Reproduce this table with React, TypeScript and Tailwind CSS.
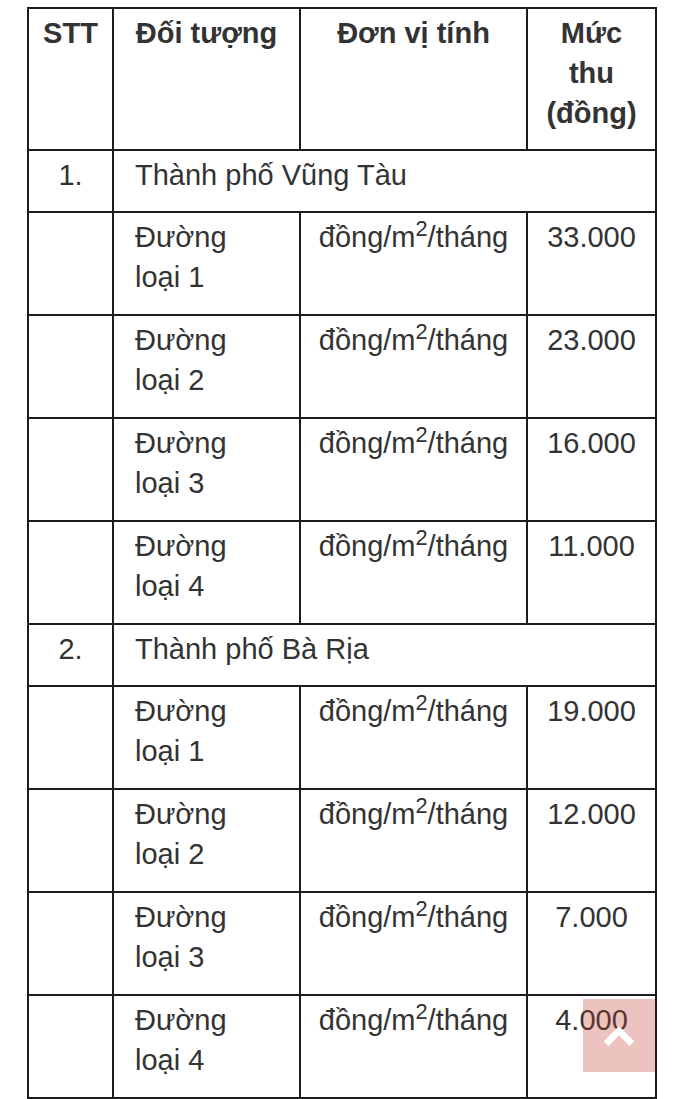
import { ChevronUp } from "lucide-react";

type Row =
  | { kind: "group"; stt: string; name: string }
  | { kind: "item"; loai: string; gia: string };

const rows: Row[] = [
  { kind: "group", stt: "1.", name: "Thành phố Vũng Tàu" },
  { kind: "item", loai: "loại 1", gia: "33.000" },
  { kind: "item", loai: "loại 2", gia: "23.000" },
  { kind: "item", loai: "loại 3", gia: "16.000" },
  { kind: "item", loai: "loại 4", gia: "11.000" },
  { kind: "group", stt: "2.", name: "Thành phố Bà Rịa" },
  { kind: "item", loai: "loại 1", gia: "19.000" },
  { kind: "item", loai: "loại 2", gia: "12.000" },
  { kind: "item", loai: "loại 3", gia: "7.000" },
  { kind: "item", loai: "loại 4", gia: "4.000" },
];

const base = "border-2 border-[#1c1c1c] align-top pt-[4px] leading-[40px]";
const cell = `${base} pb-[17px]`;
const group = `${base} pb-[16px]`;
const head = `${base} pb-[16px] font-bold text-center px-1`;

export default function App() {
  return (
    <div className="min-h-[1099px] bg-white pt-[7px] pl-[27px] text-[#333] text-[29px] font-['Liberation_Sans',Arial,sans-serif]">
      <table className="table-fixed border-collapse w-[630px]">
        <colgroup>
          <col className="w-[85px]" />
          <col className="w-[187px]" />
          <col className="w-[227px]" />
          <col className="w-[129px]" />
        </colgroup>
        <thead>
          <tr>
            <th className={head}>STT</th>
            <th className={head}>Đối tượng</th>
            <th className={head}>Đơn vị tính</th>
            <th className={head}>
              Mức
              <br />
              thu
              <br />
              (đồng)
            </th>
          </tr>
        </thead>
        <tbody>
          {rows.map((r, i) =>
            r.kind === "group" ? (
              <tr key={i}>
                <td className={`${group} text-center`}>{r.stt}</td>
                <td colSpan={3} className={`${group} pl-[21px]`}>
                  {r.name}
                </td>
              </tr>
            ) : (
              <tr key={i}>
                <td className={cell}></td>
                <td className={`${cell} pl-[21px]`}>
                  Đường
                  <br />
                  {r.loai}
                </td>
                <td className={`${cell} text-center whitespace-nowrap`}>
                  đồng/m<sup>2</sup>/tháng
                </td>
                <td className={`${cell} text-center`}>{r.gia}</td>
              </tr>
            ),
          )}
        </tbody>
      </table>

      {/* nút cuộn lên đầu trang */}
      <button
        type="button"
        className="fixed right-[29px] bottom-[27px] w-[72px] h-[73px] flex items-center justify-center bg-[rgba(192,57,43,0.3)]"
      >
        <ChevronUp className="w-[42px] h-[42px] text-white" strokeWidth={3.8} strokeLinecap="square" strokeLinejoin="miter" />
      </button>
    </div>
  );
}
